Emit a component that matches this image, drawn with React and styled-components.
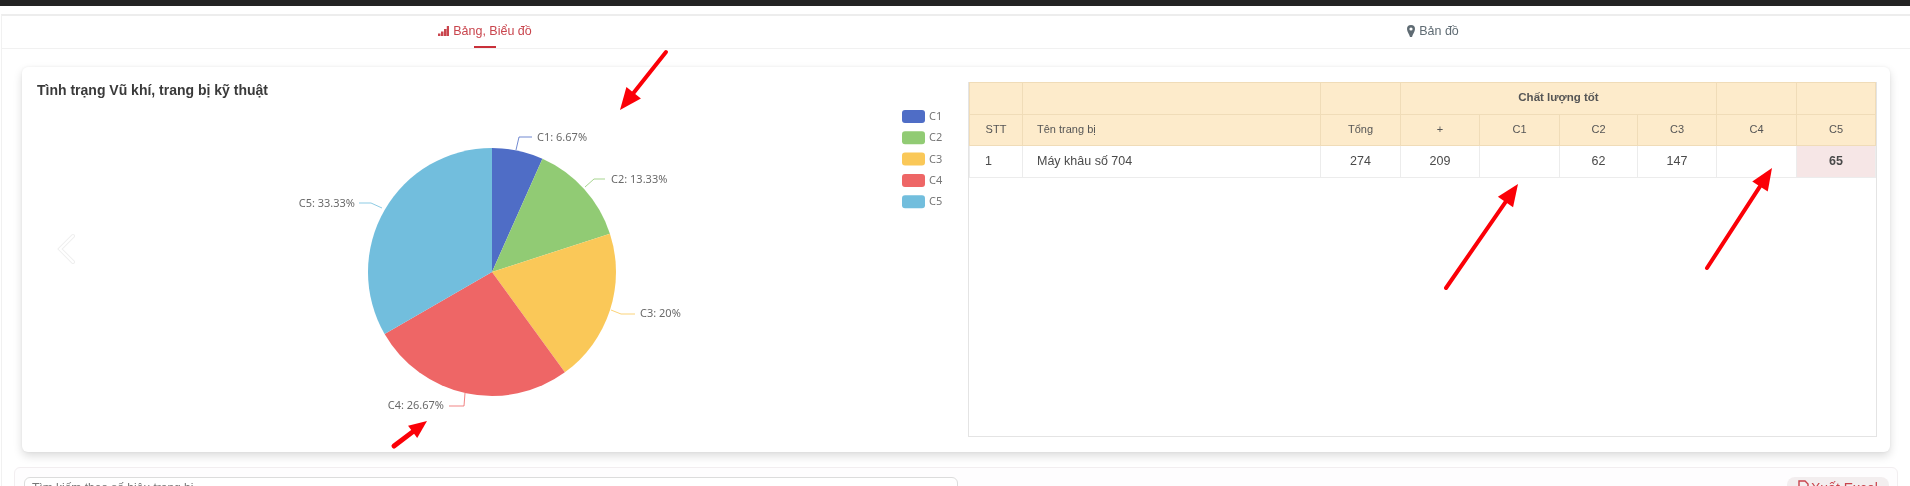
import React from "react";
import styled, { createGlobalStyle } from "styled-components";

const Global = createGlobalStyle`
  html, body { margin: 0; padding: 0; background: #fff; }
  body { font-family: "Liberation Sans", Arial, sans-serif; overflow: hidden; }
`;

const Page = styled.div`
  position: relative;
  width: 1910px;
  height: 486px;
  overflow: hidden;
  background: #fff;
  color: #444;
  filter: blur(0.5px);
`;
const TopBar = styled.div`
  height: 6px;
  background: #232323;
`;
const Content = styled.div`
  margin: 8px 0 0 1px;
  border-top: 2px solid #ededed;
  border-left: 1px solid #f1f1f1;
  height: 480px;
`;
const Tabs = styled.nav`
  display: grid;
  grid-template-columns: 948px 948px;
  padding-left: 9px;
  height: 32px;
  border-bottom: 1px solid #f1f1f1;
`;
const Tab = styled.div`
  position: relative;
  display: flex;
  align-items: center;
  justify-content: center;
  gap: 4px;
  padding-bottom: 2px;
  font-size: 12.5px;
  color: ${(p) => (p.$active ? "#c9454d" : "#5f6b73")};
  ${(p) =>
    p.$active &&
    `&::after {
      content: "";
      position: absolute;
      left: 50%;
      bottom: 0;
      width: 22px;
      height: 2px;
      margin-left: -11px;
      background: #c9303a;
    }`}
`;
const ChartCard = styled.section`
  display: grid;
  grid-template-columns: 946px 909px;
  box-sizing: border-box;
  width: 1868px;
  height: 385px;
  margin: 18px 0 0 20px;
  border-radius: 6px;
  background: #fff;
  box-shadow: 0 4px 10px rgba(0, 0, 0, 0.14), 0 0 3px rgba(0, 0, 0, 0.05);
`;
const ChartSide = styled.div`
  position: relative;
`;
const Title = styled.h2`
  position: absolute;
  top: 15px;
  left: 15px;
  margin: 0;
  font-size: 14px;
  line-height: 16px;
  font-weight: 700;
  color: #3a3a3a;
`;
const Chart = styled.svg`
  display: block;
`;
const TableWrap = styled.div`
  box-sizing: border-box;
  width: 909px;
  height: 355px;
  margin-top: 15px;
  border: 1px solid #e4e4e4;
  border-top: 0;
`;
const Table = styled.table`
  width: 100%;
  table-layout: fixed;
  border-collapse: collapse;
  font-size: 11px;
  color: #555;
`;
const Th = styled.th`
  height: 31.67px;
  padding: 0 0 2px;
  box-sizing: border-box;
  background: #fdebcb;
  border: 1px solid #f0dcb8;
  font-size: ${(p) => (p.$bold ? "11.5px" : "11px")};
  font-weight: ${(p) => (p.$bold ? 700 : 400)};
  text-align: ${(p) => p.$align || "center"};
  padding-left: ${(p) => (p.$align === "left" ? "14px" : "0")};
`;
const Td = styled.td`
  height: 31.67px;
  padding: 0 0 2px;
  box-sizing: border-box;
  border: 1px solid #ececec;
  font-size: 12.5px;
  color: #4a4a4a;
  background: ${(p) => (p.$flag ? "#f6e6e6" : "#fff")};
  font-weight: ${(p) => (p.$flag ? 700 : 400)};
  text-align: ${(p) => p.$align || "center"};
  padding-left: ${(p) => (p.$pad ? `${p.$pad}px` : "0")};
`;
const ListCard = styled.section`
  display: flex;
  justify-content: space-between;
  align-items: flex-start;
  box-sizing: border-box;
  width: 1884px;
  height: 40px;
  margin: 15px 0 0 12px;
  padding: 9px 8px 0 9px;
  border: 1px solid #f2eef0;
  border-radius: 6px;
  background: #fefdfe;
`;
const Search = styled.div`
  box-sizing: border-box;
  width: 934px;
  height: 32px;
  padding: 3px 7px;
  border: 1px solid #dcdcdc;
  border-radius: 6px;
  font-size: 12px;
  color: #777;
  background: #fff;
`;
const ExportButton = styled.button`
  display: flex;
  align-items: flex-start;
  gap: 2px;
  box-sizing: border-box;
  width: 102px;
  height: 32px;
  padding: 3px 8px 3px 11px;
  border: 0;
  border-radius: 8px;
  background: #f3eeef;
  color: #c9454d;
  font: 14px "Liberation Sans", Arial, sans-serif;
  white-space: nowrap;
`;
const Arrows = styled.svg`
  position: absolute;
  inset: 0;
  pointer-events: none;
`;

const CX = 470;
const CY = 205;
const R = 124;
const slices = [
  { name: "C1", pct: 6.67, color: "#4f6dc6", label: "C1: 6.67%", lx: 515, ly: 70, anchor: "start", line: "494,83 497,70 510,70" },
  { name: "C2", pct: 13.33, color: "#91cb74", label: "C2: 13.33%", lx: 589, ly: 112, anchor: "start", line: "563,120 572,112 583,112" },
  { name: "C3", pct: 20, color: "#fac858", label: "C3: 20%", lx: 618, ly: 246, anchor: "start", line: "589,243 599,247 613,247" },
  { name: "C4", pct: 26.67, color: "#ee6666", label: "C4: 26.67%", lx: 422, ly: 338, anchor: "end", line: "443,326 442,339 427,339" },
  { name: "C5", pct: 33.33, color: "#72bedd", label: "C5: 33.33%", lx: 333, ly: 136, anchor: "end", line: "360,141 349,136 337,136" },
];

function arcs() {
  let a = 0;
  return slices.map((s) => {
    const start = a;
    a += (s.pct / 100) * Math.PI * 2;
    const x1 = CX + R * Math.sin(start);
    const y1 = CY - R * Math.cos(start);
    const x2 = CX + R * Math.sin(a);
    const y2 = CY - R * Math.cos(a);
    const large = a - start > Math.PI ? 1 : 0;
    return { ...s, d: `M${CX} ${CY}L${x1} ${y1}A${R} ${R} 0 ${large} 1 ${x2} ${y2}Z` };
  });
}

const Arrow = ({ x1, y1, x2, y2, w = 4, head = 22 }) => {
  const dx = x2 - x1;
  const dy = y2 - y1;
  const len = Math.hypot(dx, dy);
  const ux = dx / len;
  const uy = dy / len;
  const bx = x2 - ux * head;
  const by = y2 - uy * head;
  const nx = -uy;
  const ny = ux;
  const hw = head * 0.42;
  return (
    <g>
      <line x1={x1} y1={y1} x2={bx} y2={by} stroke="#fb0007" strokeWidth={w} strokeLinecap="round" />
      <polygon points={`${x2},${y2} ${bx + nx * hw},${by + ny * hw} ${bx - nx * hw},${by - ny * hw}`} fill="#fb0007" />
    </g>
  );
};

const Bars = () => (
  <svg width="11" height="10" viewBox="0 0 11 10" fill="#c9454d">
    <path d="M0 7.500h2.500V10H0zM3 5.500h2.500V10H3zM6 3h2.500v7H6zM8.800 0H11v10H8.800z" />
  </svg>
);

const Pin = () => (
  <svg width="8" height="12" viewBox="0 0 8 12">
    <path
      fillRule="evenodd"
      fill="#5f6b73"
      d="M4 0a4 4 0 0 1 4 4c0 2.500-2.400 5.200-3 8H3C2.400 9.200 0 6.500 0 4a4 4 0 0 1 4-4zm0 2.400a1.600 1.600 0 1 0 0 3.200a1.600 1.600 0 0 0 0-3.200z"
    />
  </svg>
);

const FileIcon = () => (
  <svg width="11" height="13" viewBox="0 0 11 13" fill="none" stroke="#c9454d" strokeWidth="1.4">
    <path d="M1 1h6l3 3v8H1z" />
  </svg>
);

const widths = [53, 298, 80, 79, 80, 78, 79, 80];

export default function App() {
  return (
    <Page>
      <Global />
      <TopBar />
      <Content>
        <Tabs>
          <Tab $active>
            <Bars />
            Bảng, Biểu đồ
          </Tab>
          <Tab>
            <Pin />
            Bản đồ
          </Tab>
        </Tabs>
        <ChartCard>
          <ChartSide>
            <Title>Tình trạng Vũ khí, trang bị kỹ thuật</Title>
            <Chart width="946" height="385" viewBox="0 0 946 385">
              <path d="M51 169L38 182L51 195" fill="none" stroke="#efefef" strokeWidth="4" strokeLinecap="round" />
              <path d="M51 169L38 182L51 195" fill="none" stroke="#fff" strokeWidth="2" strokeLinecap="round" />
              {arcs().map((s) => (
                <g key={s.name}>
                  <path d={s.d} fill={s.color} />
                  <polyline points={s.line} fill="none" stroke={s.color} strokeWidth="1" opacity="0.8" />
                  <text x={s.lx} y={s.ly + 4} textAnchor={s.anchor} fontFamily="'Noto Sans', sans-serif" fontSize="11" fill="#6a6a6a">
                    {s.label}
                  </text>
                </g>
              ))}
              {slices.map((s, i) => (
                <g key={s.name}>
                  <rect x="880" y={43 + i * 21.3} width="23" height="13" rx="3" fill={s.color} />
                  <text x="907" y={53 + i * 21.3} fontFamily="'Noto Sans', sans-serif" fontSize="11" fill="#777">
                    {s.name}
                  </text>
                </g>
              ))}
            </Chart>
          </ChartSide>
          <TableWrap>
            <Table>
              <colgroup>
                {widths.map((w, i) => (
                  <col key={i} style={{ width: w }} />
                ))}
                <col />
              </colgroup>
              <thead>
                <tr>
                  <Th />
                  <Th />
                  <Th />
                  <Th colSpan={4} $bold>
                    Chất lượng tốt
                  </Th>
                  <Th />
                  <Th />
                </tr>
                <tr>
                  <Th>STT</Th>
                  <Th $align="left">Tên trang bị</Th>
                  <Th>Tổng</Th>
                  <Th>+</Th>
                  <Th>C1</Th>
                  <Th>C2</Th>
                  <Th>C3</Th>
                  <Th>C4</Th>
                  <Th>C5</Th>
                </tr>
              </thead>
              <tbody>
                <tr>
                  <Td $align="left" $pad={15}>1</Td>
                  <Td $align="left" $pad={14}>Máy khâu số 704</Td>
                  <Td>274</Td>
                  <Td>209</Td>
                  <Td />
                  <Td>62</Td>
                  <Td>147</Td>
                  <Td />
                  <Td $flag>65</Td>
                </tr>
              </tbody>
            </Table>
          </TableWrap>
        </ChartCard>
        <ListCard>
          <Search>Tìm kiếm theo số hiệu trang bị</Search>
          <ExportButton>
            <FileIcon />
            Xuất Excel
          </ExportButton>
        </ListCard>
      </Content>
      <Arrows width="1910" height="486" viewBox="0 0 1910 486">
        <Arrow x1={666} y1={52} x2={620} y2={110} />
        <Arrow x1={1446} y1={288} x2={1518} y2={184} />
        <Arrow x1={1707} y1={268} x2={1772} y2={168} />
        <Arrow x1={394} y1={446} x2={427} y2={421} w={5} head={18} />
      </Arrows>
    </Page>
  );
}
